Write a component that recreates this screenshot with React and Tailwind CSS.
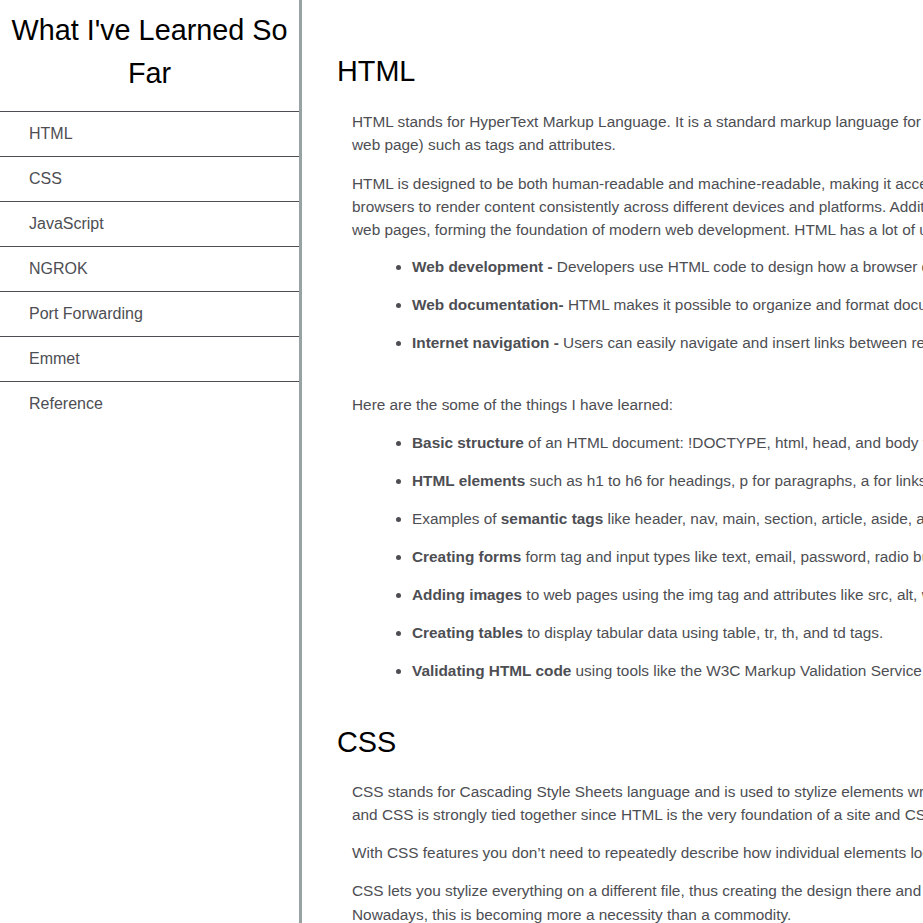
import React from "react";

const navItems = ["HTML", "CSS", "JavaScript", "NGROK", "Port Forwarding", "Emmet", "Reference"];

function Line({ children }) {
  return <span className="block whitespace-nowrap">{children}</span>;
}

function Li({ first, children }) {
  return (
    <li className={first ? "ml-[20px] mt-[14px] whitespace-nowrap" : "ml-[20px] mt-[15px] whitespace-nowrap"}>
      {children}
    </li>
  );
}

export default function App() {
  return (
    <div className="flex h-screen w-full overflow-hidden bg-white font-['Liberation_Sans',Arial,sans-serif] text-[#4d4e53]">
      <nav className="h-full w-[302px] shrink-0 border-r-[3px] border-[#99a2a2]">
        <header className="mx-[10px] mt-[9px] text-center text-[28.8px] leading-[43.2px] text-black">
          What I've Learned So Far
        </header>
        <ul className="mt-[15.6px]">
          {navItems.map((item) => (
            <li key={item} className="border-t border-[#4d4e53]">
              <a className="block py-[10px] pl-[29px] pr-[30px] text-[16px] leading-[24px] text-[#4d4e53]">
                {item}
              </a>
            </li>
          ))}
        </ul>
      </nav>

      <main className="min-w-0 flex-1 overflow-hidden pl-[35px] pt-[50px]">
        <section>
          <header className="text-[28.8px] leading-[43.2px] text-black">HTML</header>
          <article className="ml-[15px] text-[15.36px] leading-[23.04px]">
            <p className="mt-[17px]">
              <Line>
                HTML stands for HyperText Markup Language. It is a standard markup language for creating web pages that describes the structure of a page (a
              </Line>
              <Line>web page) such as tags and attributes.</Line>
            </p>
            <p className="mt-[15.36px]">
              <Line>
                HTML is designed to be both human-readable and machine-readable, making it accessible to developers and enabling
              </Line>
              <Line>
                browsers to render content consistently across different devices and platforms. Additionally, HTML lets you link
              </Line>
              <Line>
                web pages, forming the foundation of modern web development. HTML has a lot of uses, such as:
              </Line>
            </p>
            <ul className="list-disc pl-[40px]">
              <Li first>
                <b>Web development -</b> Developers use HTML code to design how a browser displays web page elements.
              </Li>
              <Li>
                <b>Web documentation-</b> HTML makes it possible to organize and format documents, similarly to Microsoft Word.
              </Li>
              <Li>
                <b>Internet navigation -</b> Users can easily navigate and insert links between related pages and websites.
              </Li>
            </ul>
            <p className="mt-[39px] whitespace-nowrap">Here are the some of the things I have learned:</p>
            <ul className="list-disc pl-[40px]">
              <Li>
                <b>Basic structure</b> of an HTML document: !DOCTYPE, html, head, and body tags.
              </Li>
              <Li>
                <b>HTML elements</b> such as h1 to h6 for headings, p for paragraphs, a for links, img for images.
              </Li>
              <Li>
                Examples of <b>semantic tags</b> like header, nav, main, section, article, aside, and footer.
              </Li>
              <Li>
                <b>Creating forms</b> form tag and input types like text, email, password, radio buttons and checkboxes.
              </Li>
              <Li>
                <b>Adding images</b> to web pages using the img tag and attributes like src, alt, width and height.
              </Li>
              <Li>
                <b>Creating tables</b> to display tabular data using table, tr, th, and td tags.
              </Li>
              <Li>
                <b>Validating HTML code</b> using tools like the W3C Markup Validation Service.
              </Li>
            </ul>
          </article>
        </section>

        <section className="mt-[38.6px]">
          <header className="text-[28.8px] leading-[43.2px] text-black">CSS</header>
          <article className="ml-[15px] text-[15.36px] leading-[23.04px]">
            <p className="mt-[15.5px]">
              <Line>
                CSS stands for Cascading Style Sheets language and is used to stylize elements written in a markup language such as HTML. HTML
              </Line>
              <Line>
                and CSS is strongly tied together since HTML is the very foundation of a site and CSS is all of the aesthetics.
              </Line>
            </p>
            <p className="mt-[15.36px]">
              <Line>
                With CSS features you don’t need to repeatedly describe how individual elements look in every single page.
              </Line>
            </p>
            <p className="mt-[15.36px]">
              <Line>
                CSS lets you stylize everything on a different file, thus creating the design there and then linking it to the HTML.
              </Line>
              <Line>Nowadays, this is becoming more a necessity than a commodity.</Line>
            </p>
          </article>
        </section>
      </main>
    </div>
  );
}
